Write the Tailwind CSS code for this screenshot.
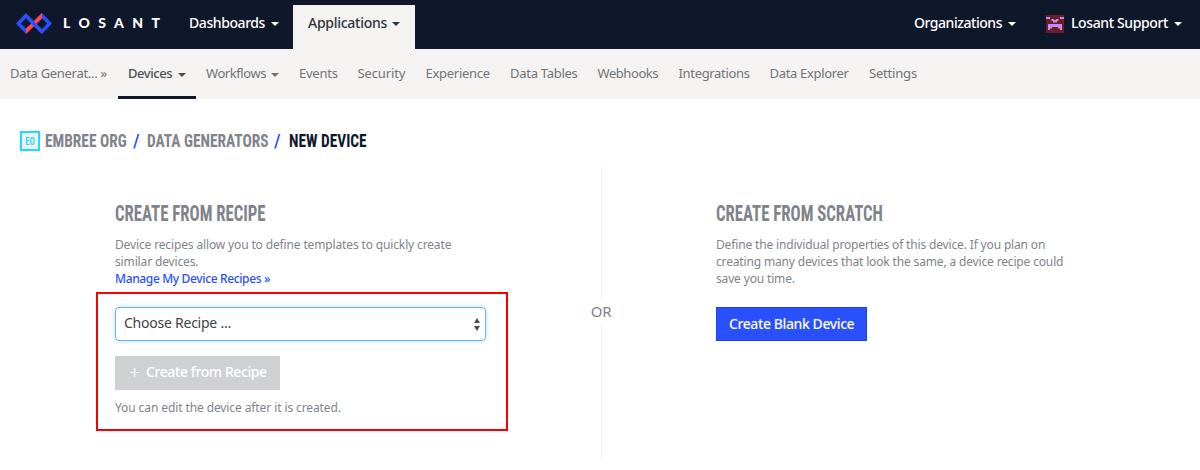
<!DOCTYPE html>
<html lang="en">
<head>
<meta charset="utf-8">
<title>New Device</title>
<script src="https://cdn.jsdelivr.net/npm/@tailwindcss/browser@4"></script>
</head>
<body class="h-[470px] w-[1200px] overflow-hidden bg-white font-['Noto_Sans',sans-serif] text-[#7f838b] whitespace-nowrap">
<header class="flex h-[49px] bg-[#0f182b] text-[14px] font-medium leading-[46px] text-white">
  <a class="flex w-[189px] items-start pl-4">
    <svg class="mt-[13px] h-[21px] w-[36px]" viewBox="0 0 36 21">
      <path d="M10 0L20 10.500L26 16.300L31.200 10.500L26 5.200L23 8.200L20.500 5.500L26 0L36 10.500L26 21L10 5.200L4.800 10.500L10 15.700V21L0 10.500Z" fill="#2950ff"/>
      <path d="M10 15.600L26 0V5.400L10 21Z" fill="#ff4655"/>
      <path d="M15.500 5.700L20.800 11L26 16.300L26 21L12.800 8.200Z" fill="#2950ff"/>
    </svg>
    <span class="ml-[11px] font-['Lato',sans-serif] text-[14px] font-black tracking-[8.400px]">LOSANT</span>
  </a>
  <a class="flex w-[104px]"><span class="w-[82px] tracking-[-0.42px]">Dashboards</span><svg class="mt-[22px] h-1 w-2" viewBox="0 0 8 4"><path d="M0 0H8L4 4Z" fill="white"/></svg></a>
  <a class="mt-[5px] flex w-[122px] bg-[#f5f3f2] pl-[15px] leading-[36px] text-[#30333a]"><span class="w-[84px] tracking-[-0.27px]">Applications</span><svg class="mt-[17px] h-1 w-2" viewBox="0 0 8 4"><path d="M0 0H8L4 4Z" fill="#30333a"/></svg></a>
  <a class="ml-auto flex w-[132px]"><span class="w-[94px] tracking-[-0.46px]">Organizations</span><svg class="mt-[22px] h-1 w-2" viewBox="0 0 8 4"><path d="M0 0H8L4 4Z" fill="white"/></svg></a>
  <a class="flex w-[154px]">
    <svg class="mt-[15px] mr-[7px] h-[18px] w-[18px]" viewBox="0 0 18 18"><path d="M0 0H18V18H0Z" fill="#6d1d25"/><path d="M0 2H4V4H0ZM14 2H18V4H14ZM5.500 4H8V5H10V4H12.500V6H11V7.500H7V6H5.500ZM2 9H16V15H14V13.500H12V12H6V13.500H4V15H2Z" fill="#bd8cf8"/></svg>
    <span class="w-[103px] tracking-[-0.38px]">Losant Support</span><svg class="mt-[22px] h-1 w-2" viewBox="0 0 8 4"><path d="M0 0H8L4 4Z" fill="white"/></svg>
  </a>
</header>
<nav class="flex h-[50px] bg-[#f5f3f2] pl-[10px] text-[13px] leading-[48px] text-[#707378]">
  <a class="w-[108px] tracking-[-0.3px]">Data Generat... »</a>
  <a class="flex w-[78px] border-b-[3px] border-[#0f182b] pl-[10px] font-medium text-[#4d5056]"><span class="w-[50px] tracking-[-0.45px]">Devices</span><svg class="mt-[24px] h-1 w-2" viewBox="0 0 8 4"><path d="M0 0H8L4 4Z" fill="#4d5056"/></svg></a>
  <a class="flex w-[103px] pl-[10px]"><span class="w-[65px] tracking-[-0.43px]">Workflows</span><svg class="mt-[24px] h-1 w-2" viewBox="0 0 8 4"><path d="M0 0H8L4 4Z" fill="#707378"/></svg></a>
  <a class="w-[58.500px] tracking-[-0.25px]">Events</a>
  <a class="w-[68px] tracking-[-0.13px]">Security</a>
  <a class="w-[84.500px] tracking-[-0.28px]">Experience</a>
  <a class="w-[87.500px] tracking-[-0.27px]">Data Tables</a>
  <a class="w-[81px] tracking-[-0.43px]">Webhooks</a>
  <a class="w-[91px] tracking-[-0.33px]">Integrations</a>
  <a class="w-[99.500px] tracking-[-0.32px]">Data Explorer</a>
  <a class="tracking-[-0.19px]">Settings</a>
</nav>
<div class="flex h-[67px] items-start pt-[32px] pl-5 font-['Roboto',sans-serif] text-[19px] font-bold leading-[19px] [font-stretch:75%]">
  <span class="flex h-5 w-5 items-center justify-center border-2 border-[#1cdcf7] bg-[#f1f1f3] text-[11px] font-semibold text-[#1cdcf7]"><span class="scale-x-80">EO</span></span>
  <span class="ml-[5px] w-[88px]"><span class="inline-block origin-left scale-x-81">EMBREE ORG</span></span>
  <span class="w-[14px] font-medium text-[#2950ff]">/</span>
  <span class="w-[127px]"><span class="inline-block origin-left scale-x-81">DATA GENERATORS</span></span>
  <span class="w-[15px] font-medium text-[#2950ff]">/</span>
  <span class="inline-block origin-left scale-x-81 text-[#0f182b]">NEW DEVICE</span>
</div>
<main class="flex h-[294px] text-[12px] leading-[17px]">
  <section class="relative w-[581px] pt-[36px] pl-[115px]">
    <h2 class="h-[34px] w-[200px] origin-left scale-x-78 font-['Roboto',sans-serif] text-[21.500px] font-bold leading-[24px] [font-stretch:75%]">CREATE FROM RECIPE</h2>
    <p class="tracking-[-0.140px]">Device recipes allow you to define templates to quickly create<br>similar devices.</p>
    <a class="block font-medium tracking-[-0.36px] text-[#2950ff]">Manage My Device Recipes »</a>
    <div class="mt-5 flex h-[34px] w-[371px] justify-between rounded-[4px] border border-[#6eb6f2] bg-white pr-[5px] pl-[8px] text-[14px] leading-[30px] tracking-[-0.24px] text-[#3f4247] shadow-[0_0_5px_#b5dcfb]">
      <span>Choose Recipe ...</span>
      <svg class="mt-[10px] h-[13px] w-[6px]" viewBox="0 0 6 13"><path d="M3 0L6 5H0ZM0 8H6L3 13Z" fill="#4a4c50"/></svg>
    </div>
    <div class="mt-[15px] flex h-[34px] w-[164.500px] items-start bg-[#cfd0d4] pl-[15px] text-[14px] font-medium leading-[32px] tracking-[-0.4px] text-white">
      <svg class="mt-[12px] mr-[7px] h-[9px] w-[9px]" viewBox="0 0 9 9"><path d="M4.500 0V9M0 4.500H9" stroke="white" stroke-width="1.200"/></svg>Create from Recipe
    </div>
    <p class="mt-[9px] tracking-[-0.1px]">You can edit the device after it is created.</p>
    <div class="absolute top-[126px] left-[96px] h-[139px] w-[412px] border-2 border-[#fb0000]"></div>
  </section>
  <div class="flex w-10 flex-col items-center">
    <div class="h-[133px] w-px bg-[#f1f1f2]"></div>
    <div class="h-[26px] text-[15px] leading-[25px] tracking-[-0.3px]">OR</div>
    <div class="h-[135px] w-px bg-[#f1f1f2]"></div>
  </div>
  <section class="pt-[36px] pl-[95px]">
    <h2 class="h-[34px] w-[200px] origin-left scale-x-78 font-['Roboto',sans-serif] text-[21.500px] font-bold leading-[24px] [font-stretch:75%]">CREATE FROM SCRATCH</h2>
    <p class="tracking-[-0.155px]">Define the individual properties of this device. If you plan on<br>creating many devices that look the same, a device recipe could<br>save you time.</p>
    <div class="mt-5 h-[34px] w-[151px] border border-[#1a3ffa] bg-[#2950ff] pl-3 text-[14px] font-medium leading-[31px] tracking-[-0.4px] text-white">Create Blank Device</div>
  </section>
</main>
</body>
</html>
